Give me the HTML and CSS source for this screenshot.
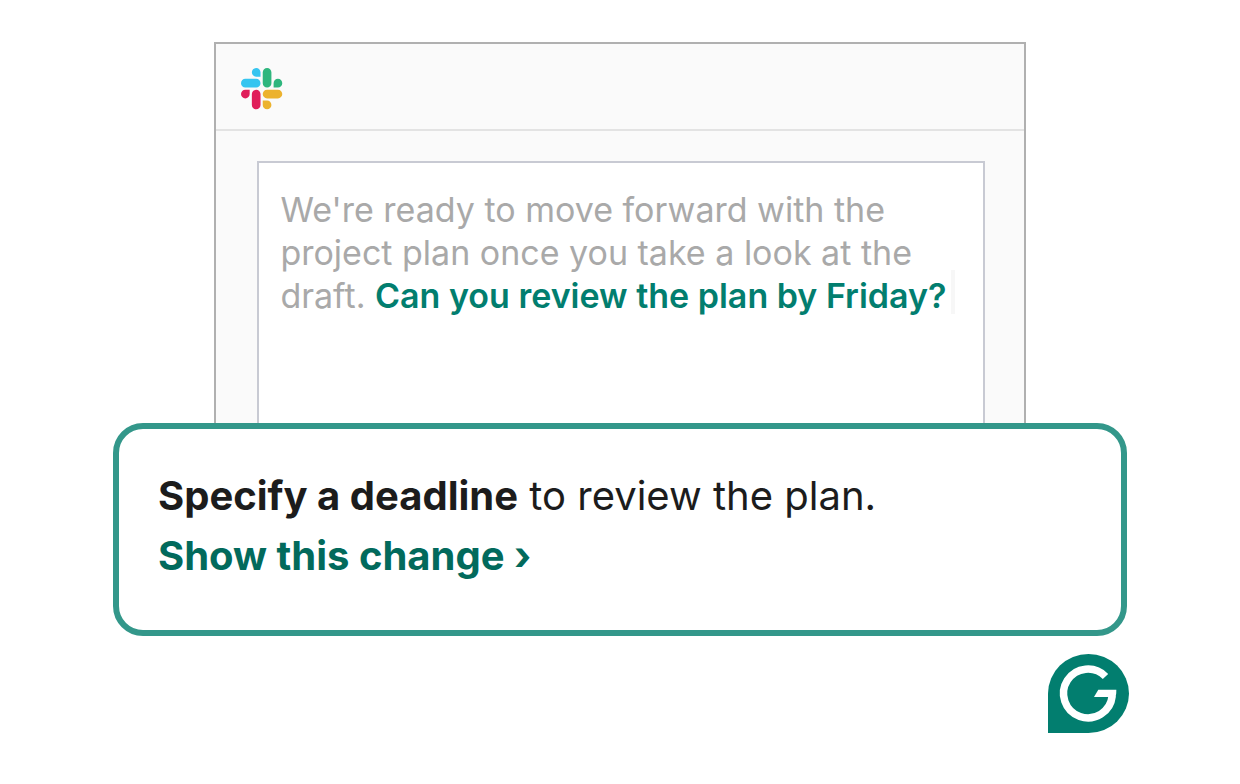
FILE: index.html
```html
<!DOCTYPE html>
<html lang="en">
<head>
<meta charset="utf-8">
<meta name="viewport" content="width=device-width, initial-scale=1">
<title>Specify a deadline</title>
<link rel="stylesheet" href="styles.css">
</head>
<body>
<main class="stage">
  <section class="window">
    <header class="window-bar">
      <svg class="slack" viewBox="0 0 122 122" role="img" aria-label="Slack">
        <path fill="#e01e5a" d="M25.800 77.600c0 7.100-5.800 12.900-12.900 12.900S0 84.700 0 77.600s5.800-12.900 12.900-12.900h12.900v12.900zM32.300 77.600c0-7.100 5.800-12.900 12.900-12.900s12.900 5.800 12.900 12.900v32.300c0 7.100-5.800 12.900-12.900 12.900s-12.900-5.800-12.900-12.900V77.600z"/>
        <path fill="#36c5f0" d="M45.200 25.800c-7.100 0-12.900-5.800-12.900-12.900S38.100 0 45.200 0s12.900 5.800 12.900 12.900v12.900H45.200zM45.200 32.300c7.100 0 12.900 5.800 12.900 12.900s-5.800 12.900-12.900 12.900H12.900C5.800 58.100 0 52.300 0 45.200s5.800-12.900 12.900-12.900h32.300z"/>
        <path fill="#2eb67d" d="M97 45.200c0-7.100 5.800-12.900 12.900-12.900s12.900 5.800 12.900 12.900-5.800 12.900-12.900 12.900H97V45.200zM90.500 45.200c0 7.100-5.800 12.900-12.900 12.900s-12.900-5.800-12.900-12.900V12.900C64.700 5.800 70.500 0 77.600 0s12.900 5.800 12.900 12.900v32.300z"/>
        <path fill="#ecb22e" d="M77.600 97c7.100 0 12.900 5.800 12.900 12.900s-5.800 12.900-12.900 12.900-12.900-5.800-12.900-12.900V97h12.900zM77.600 90.500c-7.100 0-12.900-5.800-12.900-12.900s5.800-12.900 12.900-12.900h32.300c7.100 0 12.900 5.800 12.900 12.900s-5.800 12.900-12.900 12.900H77.600z"/>
      </svg>
    </header>
    <div class="window-body">
      <p class="message">We're ready to move forward with the project plan once you take a look at the draft. <strong class="added">Can you review the plan by Friday?</strong><span class="caret"></span></p>
    </div>
  </section>
  <section class="suggestion">
    <p class="advice"><strong>Specify a deadline</strong> to review the plan.</p>
    <a class="show" href="#">Show this change ›</a>
  </section>
  <svg class="badge" viewBox="0 0 81 79" role="img" aria-label="Grammarly">
    <path fill="#027e6f" d="M0 79V39.500A40.500 39.500 0 1 1 40.500 79z"/>
    <path fill="none" stroke="#fff" stroke-width="7.500" d="M57.500 22.500A24.400 24.400 0 1 0 64.200 42"/>
    <path fill="#fff" d="M50.300 35.700H68.300Q68.600 39 67.600 43H46z"/>
  </svg>
</main>
</body>
</html>
```
FILE: styles.css
```css
* {
  box-sizing: border-box;
}

body {
  margin: 0;
  padding: 42px 24px;
  background: #fff;
  color: #1c1c1c;
  font-family: Inter, "Liberation Sans", sans-serif;
}

p {
  margin: 0;
}

.stage {
  display: flex;
  flex-direction: column;
  max-width: 1014px;
  margin: 0 auto;
}

.window {
  margin: 0 10%;
  border: 2px solid #b0b0b0;
  border-bottom: 0;
  background: #fafafa;
}

.window-bar {
  display: flex;
  align-items: center;
  padding: 24px 25px 20px;
  border-bottom: 2px solid #e3e3e3;
}

.slack {
  width: 41px;
  height: 41px;
  overflow: visible;
}

.window-body {
  padding: 30px 39px 0 41px;
}

.message {
  min-height: 262px;
  padding: 25px 21px;
  border: 2px solid #c8cad3;
  border-bottom: 0;
  background: #fff;
  color: #a9a9a9;
  font-size: 34px;
  line-height: 43px;
}

.added {
  color: #027e6f;
  font-weight: 600;
}

.caret {
  display: inline-block;
  width: 4px;
  height: 44px;
  margin: -10px 0 0 4px;
  background: #f7f7f7;
  vertical-align: -6px;
}

.suggestion {
  padding: 37px 39px 44px;
  border: 6px solid #33978a;
  border-radius: 30px;
  background: #fff;
  font-size: 40px;
  line-height: 60px;
}

.advice strong,
.show {
  font-weight: 700;
}

.show {
  color: #026a5c;
  text-decoration: none;
}

.badge {
  align-self: flex-end;
  width: 81px;
  height: 79px;
  margin: 18px -2px 0 0;
}
```
